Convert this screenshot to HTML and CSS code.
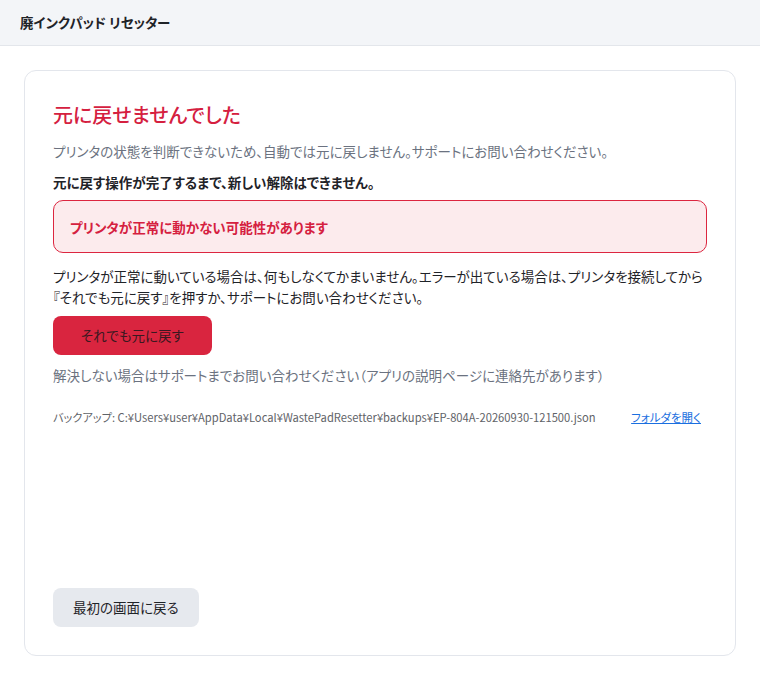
FILE: index.html
```html
<!DOCTYPE html>
<html lang="ja">
<head>
  <meta charset="UTF-8">
  <meta name="viewport" content="width=device-width, initial-scale=1.0">
  <title>廃インクパッド リセッター</title>
  <link rel="stylesheet" href="styles.css">
</head>
<body>

<header class="app-header">
  <span class="app-title">廃インクパッド リセッター</span>
</header>

<main class="page">
  <section class="card">
    <h1 class="fail-title">元に戻せませんでした</h1>
    <p class="muted">プリンタの状態を判断できないため、自動では元に戻しません。サポートにお問い合わせください。</p>
    <p class="strong">元に戻す操作が完了するまで、新しい解除はできません。</p>

    <div class="alert">プリンタが正常に動かない可能性があります</div>

    <p class="body-text">プリンタが正常に動いている場合は、何もしなくてかまいません。エラーが出ている場合は、プリンタを接続してから『それでも元に戻す』を押すか、サポートにお問い合わせください。</p>

    <div class="actions">
      <button class="btn btn-danger">それでも元に戻す</button>
    </div>

    <p class="muted help">解決しない場合はサポートまでお問い合わせください（アプリの説明ページに連絡先があります）</p>

    <div class="backup-row">
      <span class="backup-path">バックアップ: C:¥Users¥user¥AppData¥Local¥WastePadResetter¥backups¥EP-804A-20260930-121500.json</span>
      <a href="#" class="folder-link">フォルダを開く</a>
    </div>

    <div class="footer-actions">
      <button class="btn btn-plain">最初の画面に戻る</button>
    </div>
  </section>
</main>

</body>
</html>
```

FILE: styles.css
```css
* {
  box-sizing: border-box;
}
body {
  font-family: "Noto Sans CJK JP", "Noto Sans", sans-serif;
  font-feature-settings: "palt";
  font-size: 13.5px;
  line-height: 21px;
  color: #1f2328;
  background-color: #ffffff;
  margin: 0;
  padding: 0;
}
.app-header {
  height: 46px;
  padding: 0 20px;
  display: flex;
  align-items: center;
  background-color: #f3f5f8;
  border-bottom: 1px solid #e3e6eb;
}
.app-title {
  font-size: 13.5px;
  font-weight: bold;
  color: #1f2328;
}
.page {
  height: calc(100vh - 46px);
  padding: 24px;
  display: flex;
}
.card {
  flex: 1;
  display: flex;
  flex-direction: column;
  padding: 28px;
  border: 1px solid #e3e6ec;
  border-radius: 12px;
  background-color: #ffffff;
}
.fail-title {
  margin: 0 0 10px;
  font-size: 20px;
  line-height: 32px;
  font-weight: 500;
  color: #d5203f;
}
p {
  margin: 0;
}
.muted {
  color: #6b7280;
  margin-bottom: 10px;
}
.strong {
  font-weight: bold;
  margin-bottom: 7px;
}
.alert {
  padding: 16px 16px 14px;
  border: 1px solid #dc2640;
  border-radius: 10px;
  background-color: #fcebed;
  color: #d5203f;
  font-weight: bold;
}
.body-text {
  margin-top: 13px;
}
.actions {
  margin-top: 8px;
  display: flex;
}
.btn {
  font-family: inherit;
  font-feature-settings: "palt";
  font-size: 13.5px;
  line-height: 21px;
  padding: 9px 28px;
  border: none;
  border-radius: 8px;
  cursor: pointer;
}
.btn-danger {
  background-color: #d9253f;
  color: #3a1820;
}
.help {
  margin-top: 10px;
  margin-bottom: 0;
}
.backup-row {
  margin-top: 22px;
  display: flex;
  justify-content: space-between;
  align-items: center;
  gap: 12px;
  font-size: 11.2px;
  line-height: 18px;
}
.backup-path {
  color: #5f6368;
  white-space: nowrap;
}
.folder-link {
  color: #1a6fe0;
  font-size: 11.5px;
  padding-right: 6px;
  white-space: nowrap;
}
.footer-actions {
  margin-top: auto;
  display: flex;
}
.btn-plain {
  padding: 9px 20px;
  background-color: #e6e9ee;
  color: #1f2328;
}
```
